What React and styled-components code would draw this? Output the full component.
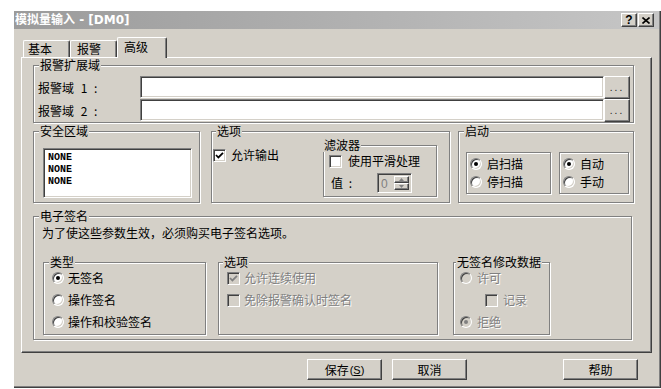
import React from 'react';
import styled, { createGlobalStyle, css } from 'styled-components';

const FACE = '#d4d0c8';

const GlobalStyle = createGlobalStyle`
  html, body { margin: 0; padding: 0; background: #fff; }
  body {
    font-family: "Noto Sans CJK SC", "Liberation Sans", sans-serif;
    font-size: 12px;
    color: #000;
  }
`;

const raised = css`
  background: ${FACE};
  border-top: 1px solid #fff;
  border-left: 1px solid #fff;
  border-right: 1px solid #404040;
  border-bottom: 1px solid #404040;
  box-shadow: inset -1px -1px 0 #808080;
  box-sizing: border-box;
`;

const sunken = css`
  border-top: 1px solid #808080;
  border-left: 1px solid #808080;
  border-right: 1px solid #fff;
  border-bottom: 1px solid #fff;
  box-shadow: inset 1px 1px 0 #404040, inset -1px -1px 0 ${FACE};
  box-sizing: border-box;
`;

const Page = styled.div`
  padding: 11px 0 0 14px;
`;

const Dialog = styled.div`
  width: 647px;
  height: 377px;
  box-sizing: border-box;
  background: ${FACE};
  border-right: 1px solid #404040;
  border-bottom: 1px solid #404040;
  box-shadow: inset -1px -1px 0 #808080;
  display: flex;
  flex-direction: column;
`;

const TitleBar = styled.div`
  height: 18px;
  margin-right: 1px;
  background: linear-gradient(90deg, #9b9b9b 0%, #b4b4b4 60%, #c6c6c6 100%);
  display: flex;
  align-items: center;
  justify-content: space-between;
  padding: 0 5px 0 1px;
  box-sizing: border-box;
`;

const TitleText = styled.span`
  color: #fff;
  font-family: "DejaVu Sans", "Noto Sans CJK SC", sans-serif;
  font-weight: bold;
  font-size: 12px;
  line-height: 18px;
`;

const TitleButtons = styled.div`
  display: flex;
`;

const CaptionButton = styled.div`
  ${raised};
  width: 16px;
  height: 14px;
  display: flex;
  align-items: center;
  justify-content: center;
  font-family: "Liberation Sans", sans-serif;
  font-weight: bold;
  font-size: 12px;
  line-height: 12px;
  margin-left: ${p => p.$gap || 0}px;
`;

const TabStrip = styled.div`
  display: flex;
  align-items: flex-end;
  height: 20px;
  margin-top: 8px;
  padding-left: 9px;
  position: relative;
  z-index: 2;
`;

const Tab = styled.div`
  box-sizing: border-box;
  width: ${p => p.$w}px;
  height: ${p => (p.$active ? 21 : 17)}px;
  margin-bottom: ${p => (p.$active ? -1 : 0)}px;
  padding-left: ${p => p.$pad}px;
  padding-bottom: ${p => (p.$active ? 3 : 0)}px;
  background: ${FACE};
  border-top: 1px solid #fff;
  border-left: 1px solid #fff;
  border-right: 1px solid #404040;
  box-shadow: inset -1px 0 0 #808080;
  border-radius: 2px 2px 0 0;
  display: flex;
  align-items: center;
  line-height: 14px;
`;

const Panel = styled.div`
  position: relative;
  z-index: 1;
  margin-left: 7px;
  width: 631px;
  height: 296px;
  ${raised};
  padding: 7px 0 0 11px;
  display: flex;
  flex-direction: column;
`;

const Group = styled.div`
  position: relative;
  box-sizing: border-box;
  width: ${p => p.$w}px;
  height: ${p => p.$h}px;
  border: 1px solid #808080;
  box-shadow: inset 1px 1px 0 #fff, 1px 1px 0 #fff;
  flex: none;
`;

const Legend = styled.span`
  position: absolute;
  top: -8px;
  left: ${p => (p.$left != null ? p.$left : 5)}px;
  padding: 0 1px;
  background: ${FACE};
  line-height: 14px;
  white-space: nowrap;
`;

const Row = styled.div`
  display: flex;
  align-items: flex-start;
  margin-top: ${p => p.$top || 0}px;
`;

/* 报警扩展域 */
const FieldGrid = styled.div`
  display: grid;
  grid-template-columns: 102px 464px 26px;
  grid-template-rows: 23px 23px;
  padding: 10px 0 0 4px;
  align-items: center;
`;

const FieldLabel = styled.span`
  line-height: 14px;
  white-space: pre;
  word-spacing: 4px;
`;

const TextInput = styled.div`
  ${sunken};
  background: #fff;
  height: 22px;
  align-self: start;
`;

const DotsButton = styled.div`
  ${raised};
  width: 26px;
  height: 23px;
  align-self: start;
  display: flex;
  justify-content: center;
  align-items: flex-end;
  padding-bottom: 6px;
  font-family: "Liberation Sans", sans-serif;
  font-size: 10px;
  line-height: 8px;
  letter-spacing: 2px;
  color: #202020;
`;

/* 安全区域 */
const ListBox = styled.div`
  ${sunken};
  background: #fff;
  width: 149px;
  height: 50px;
  margin: 16px 0 0 9px;
  padding: 3px 0 0 4px;
  font-family: "Liberation Mono", monospace;
  font-weight: bold;
  font-size: 10px;
  line-height: 12px;
`;

/* 选项 */
const OptionsBody = styled.div`
  display: grid;
  grid-template-columns: 110px 114px;
  padding-left: 1px;
`;

const Line = styled.div`
  display: flex;
  align-items: center;
  height: ${p => p.$h || 18}px;
  gap: ${p => (p.$gap != null ? p.$gap : 4)}px;
  padding-left: ${p => p.$indent || 0}px;
  margin-top: ${p => p.$top || 0}px;
  color: ${p => (p.$disabled ? '#808080' : '#000')};
  text-shadow: ${p => (p.$disabled ? '1px 1px 0 #fff' : 'none')};
  line-height: 14px;
  white-space: nowrap;
`;

const CheckBox = styled.span`
  ${sunken};
  width: 13px;
  height: 13px;
  flex: none;
  background: ${p => (p.$disabled ? FACE : '#fff')};
  display: flex;
  align-items: center;
  justify-content: center;
`;

const Radio = styled.span`
  width: 12px;
  height: 12px;
  flex: none;
  box-sizing: border-box;
  border-radius: 50%;
  border: 1px solid;
  border-color: #808080 #fff #fff #808080;
  box-shadow: inset 1px 1px 0 #404040, inset -1px -1px 0 ${FACE};
  background: ${p => (p.$disabled ? FACE : '#fff')};
  display: flex;
  align-items: center;
  justify-content: center;
  &::after {
    content: '';
    display: ${p => (p.$checked ? 'block' : 'none')};
    width: 4px;
    height: 4px;
    border-radius: 50%;
    background: ${p => (p.$disabled ? '#808080' : '#000')};
  }
`;

const ValueLabel = styled.span`
  width: 46px;
  word-spacing: 3px;
`;

const SpinBox = styled.div`
  ${sunken};
  width: 35px;
  height: 20px;
  background: ${FACE};
  display: flex;
  align-items: stretch;
  padding: 2px 2px 2px 3px;
`;

const SpinValue = styled.span`
  flex: 1;
  color: #808080;
  font-family: "Liberation Sans", sans-serif;
  font-size: 12px;
  line-height: 16px;
`;

const SpinButtons = styled.div`
  display: flex;
  flex-direction: column;
  width: 15px;
`;

const SpinButton = styled.div`
  ${raised};
  flex: 1;
  display: flex;
  align-items: center;
  justify-content: center;
`;

/* 启动 */
const SubBox = styled.div`
  box-sizing: border-box;
  width: ${p => p.$w}px;
  height: 42px;
  border: 1px solid #808080;
  box-shadow: inset 1px 1px 0 #fff, 1px 1px 0 #fff;
  padding: 2px 0 0 3px;
  display: flex;
  flex-direction: column;
`;

const StartBody = styled.div`
  display: flex;
  gap: 8px;
  padding: 20px 0 0 7px;
`;

/* 电子签名 */
const Notice = styled.div`
  padding: 9px 0 0 8px;
  line-height: 14px;
`;

const SigRow = styled.div`
  display: flex;
  align-items: flex-start;
  margin: 22px 0 0 9px;
`;

const SigBody = styled.div`
  display: flex;
  flex-direction: column;
  padding: 4px 0 0 ${p => p.$pad}px;
`;

/* bottom buttons */
const ButtonBar = styled.div`
  display: flex;
  margin-top: 6px;
  padding-left: 293px;
  gap: 10px;
`;

const PushButton = styled.div`
  ${raised};
  width: 75px;
  height: 21px;
  display: flex;
  align-items: center;
  justify-content: center;
  line-height: 14px;
  margin-left: ${p => p.$push || 0}px;
`;

const Mnemonic = styled.span`
  font-family: "Liberation Sans", sans-serif;
  font-size: 11px;
  margin-left: 1px;
`;

const Check = ({ color = '#000' }) => (
  <svg width="9" height="9" viewBox="0 0 9 9">
    <path d="M1 4 L3.4 6.5 L8 1.8" fill="none" stroke={color} strokeWidth="1.8" />
  </svg>
);

const Tri = ({ up }) => (
  <svg width="5" height="3" viewBox="0 0 5 3">
    <path d={up ? 'M2.5 0 L5 3 L0 3 Z' : 'M0 0 L5 0 L2.5 3 Z'} fill="#808080" />
  </svg>
);

export default function App() {
  return (
    <>
      <GlobalStyle />
      <Page>
        <Dialog>
          <TitleBar>
            <TitleText>模拟量输入 - [DM0]</TitleText>
            <TitleButtons>
              <CaptionButton>?</CaptionButton>
              <CaptionButton $gap={1}>
                <svg width="8" height="7" viewBox="0 0 8 7">
                  <path d="M0.5 0.5 L7.5 6.5 M7.5 0.5 L0.5 6.5" stroke="#000" strokeWidth="1.6" />
                </svg>
              </CaptionButton>
            </TitleButtons>
          </TitleBar>

          <TabStrip>
            <Tab $w={47} $pad={4}>基本</Tab>
            <Tab $w={47} $pad={6}>报警</Tab>
            <Tab $w={50} $pad={6} $active>高级</Tab>
          </TabStrip>

          <Panel>
            <Group $w={601} $h={58}>
              <Legend>报警扩展域</Legend>
              <FieldGrid>
                <FieldLabel>报警域 1 :</FieldLabel>
                <TextInput />
                <DotsButton>...</DotsButton>
                <FieldLabel>报警域 2 :</FieldLabel>
                <TextInput />
                <DotsButton>...</DotsButton>
              </FieldGrid>
            </Group>

            <Row $top={8}>
              <Group $w={167} $h={72}>
                <Legend>安全区域</Legend>
                <ListBox>
                  <div>NONE</div>
                  <div>NONE</div>
                  <div>NONE</div>
                </ListBox>
              </Group>

              <Group $w={239} $h={72} style={{ marginLeft: 11 }}>
                <Legend $left={4}>选项</Legend>
                <OptionsBody>
                  <Line $top={14} $gap={5}>
                    <CheckBox><Check /></CheckBox>
                    允许输出
                  </Line>
                  <Group $w={114} $h={52} style={{ marginTop: 13 }}>
                    <Legend $left={-1}>滤波器</Legend>
                    <Line $top={6} $indent={5} $gap={6}>
                      <CheckBox />
                      使用平滑处理
                    </Line>
                    <Line $top={2} $indent={7} $h={22} $gap={0}>
                      <ValueLabel>值 :</ValueLabel>
                      <SpinBox>
                        <SpinValue>0</SpinValue>
                        <SpinButtons>
                          <SpinButton><Tri up /></SpinButton>
                          <SpinButton><Tri /></SpinButton>
                        </SpinButtons>
                      </SpinBox>
                    </Line>
                  </Group>
                </OptionsBody>
              </Group>

              <Group $w={176} $h={72} style={{ marginLeft: 8 }}>
                <Legend>启动</Legend>
                <StartBody>
                  <SubBox $w={85}>
                    <Line $gap={5}><Radio $checked />启扫描</Line>
                    <Line $gap={5}><Radio />停扫描</Line>
                  </SubBox>
                  <SubBox $w={70}>
                    <Line $gap={5}><Radio $checked />自动</Line>
                    <Line $gap={5}><Radio />手动</Line>
                  </SubBox>
                </StartBody>
              </Group>
            </Row>

            <Row $top={13}>
              <Group $w={599} $h={124}>
                <Legend>电子签名</Legend>
                <Notice>为了使这些参数生效，必须购买电子签名选项。</Notice>
                <SigRow>
                  <Group $w={163} $h={73}>
                    <Legend>类型</Legend>
                    <SigBody $pad={8}>
                      <Line $h={22} $gap={4}><Radio $checked />无签名</Line>
                      <Line $h={22} $gap={4}><Radio />操作签名</Line>
                      <Line $h={22} $gap={4}><Radio />操作和校验签名</Line>
                    </SigBody>
                  </Group>
                  <Group $w={220} $h={73} style={{ marginLeft: 12 }}>
                    <Legend $left={4}>选项</Legend>
                    <SigBody $pad={8}>
                      <Line $h={22} $gap={4} $disabled>
                        <CheckBox $disabled><Check color="#808080" /></CheckBox>
                        允许连续使用
                      </Line>
                      <Line $h={22} $gap={4} $disabled>
                        <CheckBox $disabled />
                        免除报警确认时签名
                      </Line>
                    </SigBody>
                  </Group>
                  <Group $w={97} $h={73} style={{ marginLeft: 15 }}>
                    <Legend $left={2}>无签名修改数据</Legend>
                    <SigBody $pad={6}>
                      <Line $h={22} $gap={5} $disabled><Radio $disabled />许可</Line>
                      <Line $h={22} $gap={5} $indent={25} $disabled>
                        <CheckBox $disabled />
                        记录
                      </Line>
                      <Line $h={22} $gap={5} $disabled><Radio $disabled $checked />拒绝</Line>
                    </SigBody>
                  </Group>
                </SigRow>
              </Group>
            </Row>
          </Panel>

          <ButtonBar>
            <PushButton>保存<Mnemonic>(<u>S</u>)</Mnemonic></PushButton>
            <PushButton>取消</PushButton>
            <PushButton $push={86}>帮助</PushButton>
          </ButtonBar>
        </Dialog>
      </Page>
    </>
  );
}
